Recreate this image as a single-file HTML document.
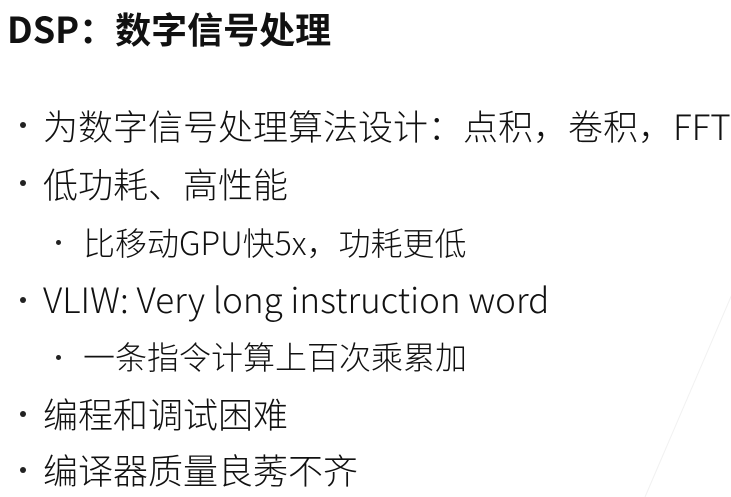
<!DOCTYPE html>
<html><head><meta charset="utf-8"><style>
html,body{margin:0;padding:0;background:#fff;width:731px;height:497px;overflow:hidden;position:relative}
.t{position:absolute;white-space:nowrap;line-height:1;font-family:"Noto Sans CJK SC","Liberation Sans",sans-serif;color:#111}
.m{font-size:35px;font-weight:300;left:43px}
.s{font-size:32px;font-weight:300;left:83px}
.d{position:absolute;border-radius:50%;background:#222}
</style></head><body>
<svg style="position:absolute;left:0;top:0" width="731" height="497"><line x1="733" y1="292" x2="645" y2="497" stroke="#f1f1f1" stroke-width="1"/></svg>
<div class="t" style="left:7px;top:10px;font-size:36px;font-weight:700">DSP：数字信号处理</div>

<div class="d" style="left:20px;top:122px;width:6px;height:6px"></div>
<div class="t m" style="top:108px">为数字信号处理算法设计：点积，卷积，FFT</div>

<div class="d" style="left:20px;top:180px;width:6px;height:6px"></div>
<div class="t m" style="top:166px">低功耗、高性能</div>

<div class="d" style="left:56px;top:240px;width:5px;height:5px"></div>
<div class="t s" style="top:226px">比移动GPU快5x，功耗更低</div>

<div class="d" style="left:20px;top:297px;width:6px;height:6px"></div>
<div class="t m" style="top:281px">VLIW: Very long instruction word</div>

<div class="d" style="left:56px;top:355px;width:5px;height:5px"></div>
<div class="t s" style="top:340px">一条指令计算上百次乘累加</div>

<div class="d" style="left:20px;top:411px;width:6px;height:6px"></div>
<div class="t m" style="top:396px">编程和调试困难</div>

<div class="d" style="left:20px;top:467px;width:6px;height:6px"></div>
<div class="t m" style="top:452px">编译器质量良莠不齐</div>
</body></html>
